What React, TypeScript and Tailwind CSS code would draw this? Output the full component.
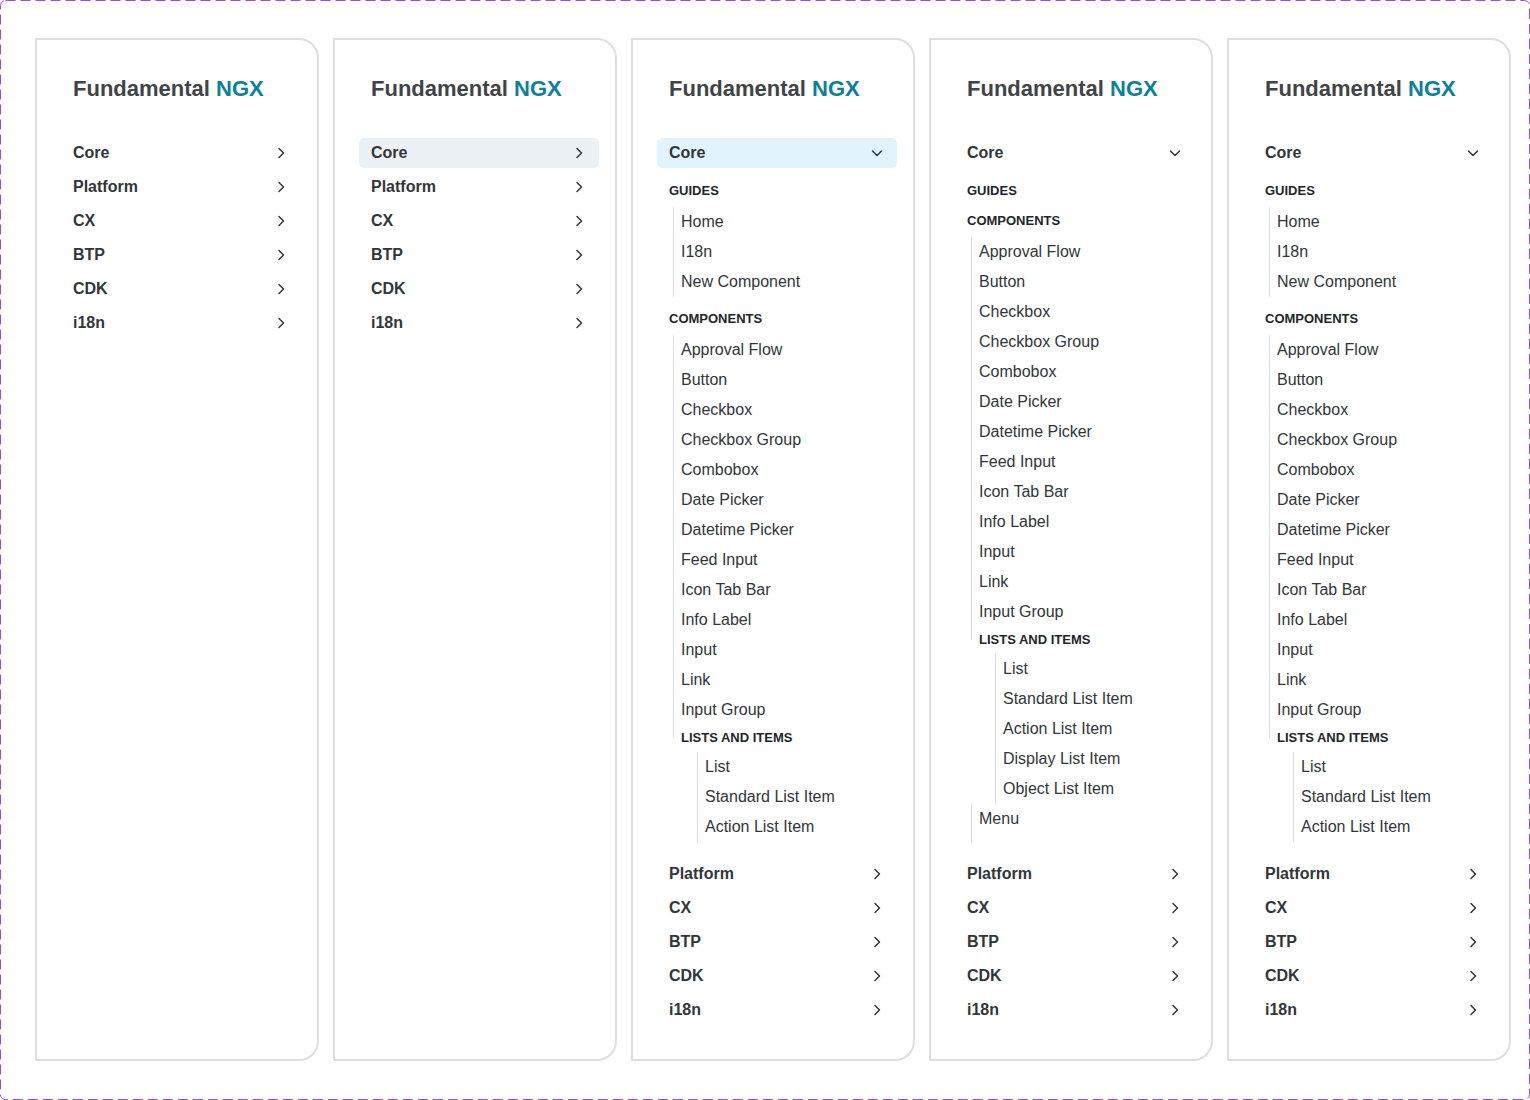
import React from 'react';

const TOP = ['Platform', 'CX', 'BTP', 'CDK', 'i18n'];
const GUIDES = ['Home', 'I18n', 'New Component'];
const COMPONENTS = [
  'Approval Flow', 'Button', 'Checkbox', 'Checkbox Group', 'Combobox', 'Date Picker',
  'Datetime Picker', 'Feed Input', 'Icon Tab Bar', 'Info Label', 'Input', 'Link', 'Input Group',
];
const LISTS = ['List', 'Standard List Item', 'Action List Item', 'Display List Item', 'Object List Item'];

type State = 'none' | 'hover' | 'active';
type Mode = 'collapsed' | 'full' | 'scrolled';

const Chevron = ({ down }: { down?: boolean }) => (
  <svg viewBox="0 0 12 12" className="w-3 h-3 shrink-0" fill="none" stroke="#32363a" strokeWidth="1.5" strokeLinecap="round" strokeLinejoin="round">
    {down ? <path d="M1.5 4 6 8.5 10.5 4" /> : <path d="M4 1.5 8.5 6 4 10.5" />}
  </svg>
);

const NavRow = ({ label, state = 'none', down }: { label: string; state?: State; down?: boolean }) => {
  const bg = state === 'hover' ? 'bg-[#ebf1f4]' : state === 'active' ? 'bg-[#e1f4fd]' : '';
  return (
    <div className={`flex items-center justify-between h-[30px] pl-3 pr-[14px] rounded-[5px] ${bg}`}>
      <span className="text-[16px] font-bold text-[#32363a] leading-[30px]">{label}</span>
      <Chevron down={down} />
    </div>
  );
};

const Heading = ({ children, className = '' }: { children: React.ReactNode; className?: string }) => (
  <div className={`h-5 leading-5 text-[13px] font-bold text-[#22262a] uppercase ${className}`}>{children}</div>
);

const Item = ({ label }: { label: string }) => (
  <div className="h-[30px] leading-[30px] border-l border-[#d9dee2] pl-[7px] text-[16px] text-[#32363a] whitespace-nowrap">
    {label}
  </div>
);

/* nested group: heading carries half of the outer line, list has its own */
const ListsGroup = ({ items }: { items: string[] }) => (
  <div>
    <div className="relative mt-[3px] mb-[4px]">
      <span className="absolute left-0 -top-[3px] h-[13px] w-px bg-[#d9dee2]" />
      <Heading className="pl-2">Lists and Items</Heading>
    </div>
    <div className="ml-6">
      {items.map(l => <Item key={l} label={l} />)}
    </div>
  </div>
);

const CoreContent = ({ mode }: { mode: Mode }) => (
  <div className="h-[675px] overflow-hidden pt-[13px]">
    <Heading className="pl-3">Guides</Heading>
    {mode === 'full' && (
      <div className="ml-4 mt-[6px]">
        {GUIDES.map(g => <Item key={g} label={g} />)}
      </div>
    )}
    <Heading className={`pl-3 ${mode === 'full' ? 'mt-3' : 'mt-[10px]'}`}>Components</Heading>
    <div className="ml-4 mt-[6px]">
      {COMPONENTS.map(c => <Item key={c} label={c} />)}
      {mode === 'full' ? (
        <ListsGroup items={LISTS.slice(0, 3)} />
      ) : (
        <>
          <ListsGroup items={LISTS} />
          <Item label="Menu" />
          <div className="h-[9px] border-l border-[#d9dee2]" />
        </>
      )}
    </div>
  </div>
);

const Panel = ({ state = 'none', mode = 'collapsed' }: { state?: State; mode?: Mode }) => (
  <div className="w-[284px] h-[1023px] shrink-0 border-2 border-[#dedede] rounded-tr-[20px] rounded-br-[20px] bg-white pl-6 pr-4 pt-[36px]">
    <h1 className="ml-3 text-[22px] leading-[26px] font-bold text-[#404448] whitespace-nowrap">
      Fundamental <span className="text-[#0a819c]">NGX</span>
    </h1>

    <nav className="mt-[36px]">
      {mode === 'collapsed' ? (
        <div className="flex flex-col gap-1">
          <NavRow label="Core" state={state} />
          {TOP.map(t => <NavRow key={t} label={t} />)}
        </div>
      ) : (
        <>
          <NavRow label="Core" state={state} down />
          <CoreContent mode={mode} />
          <div className="mt-4 flex flex-col gap-1">
            {TOP.map(t => <NavRow key={t} label={t} />)}
          </div>
        </>
      )}
    </nav>
  </div>
);

export default function App() {
  return (
    <div className="relative w-[1530px] h-[1100px] bg-white font-['Liberation_Sans',Arial,sans-serif] flex gap-[14px] pl-[35px] pt-[38px]">
      {/* dashed frame */}
      <svg className="absolute inset-0 w-[1530px] h-[1100px] pointer-events-none" viewBox="0 0 1530 1100">
        <rect x="0.5" y="0.5" width="1529" height="1099" rx="5" fill="none" stroke="#9747ff" strokeDasharray="10 5" />
      </svg>

      <Panel />
      <Panel state="hover" />
      <Panel state="active" mode="full" />
      <Panel mode="scrolled" />
      <Panel mode="full" />
    </div>
  );
}
